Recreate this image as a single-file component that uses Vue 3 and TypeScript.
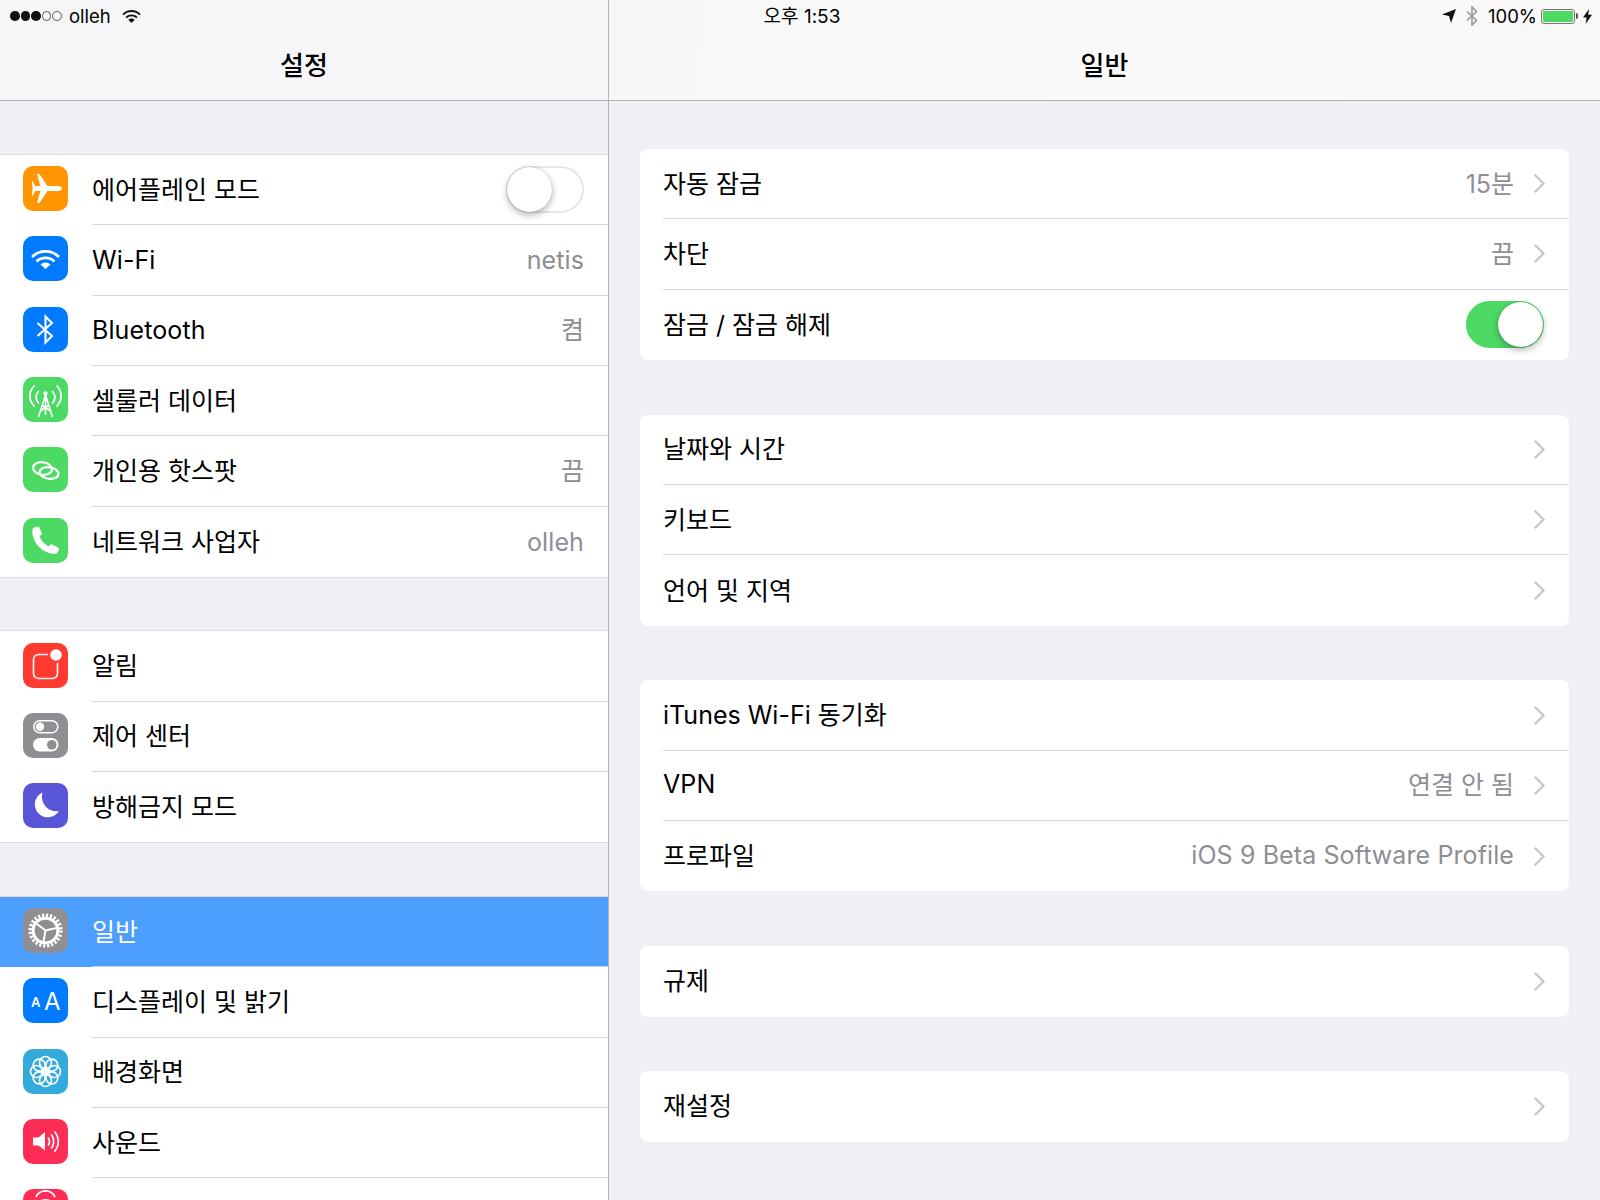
<template>
  <div class="page">
    <div class="status">
      <div class="status-left">
        <span class="dots">
          <i v-for="n in 5" :key="n" class="dot" :class="{ empty: n > 3 }"></i>
        </span>
        <span class="carrier">olleh</span>
        <svg class="st-wifi" viewBox="0 0 19 13" width="19" height="13">
          <path d="M1 4.6A12 12 0 0 1 18 4.6" fill="none" stroke="#111" stroke-width="1.9" />
          <path d="M4 7.6A8 8 0 0 1 15 7.6" fill="none" stroke="#111" stroke-width="1.9" />
          <path d="M9.5 13L6.3 9.8A4.6 4.6 0 0 1 12.7 9.8Z" fill="#111" />
        </svg>
      </div>
      <div class="status-time">오후 1:53</div>
      <div class="status-right">
        <svg class="st-loc" viewBox="0 0 14 14" width="14" height="14">
          <path d="M14 0L9 14L7 7L0 5.5Z" fill="#111" />
        </svg>
        <svg class="st-bt" viewBox="0 0 12 20" width="12" height="20">
          <path d="M1 5.5L10.5 14.5L6 19V1L10.5 5.5L1 14.5" fill="none" stroke="#9a9a9e" stroke-width="1.6" />
        </svg>
        <span class="percent">100%</span>
        <span class="battery"><i></i></span>
        <svg class="st-bolt" viewBox="0 0 9 15" width="9" height="15">
          <path d="M6 0L0 8.6H3.6L2.6 15L9 5.8H5.2Z" fill="#111" />
        </svg>
      </div>
    </div>

    <aside class="master">
      <header class="bar">설정</header>
      <div class="master-body">
        <section v-for="(group, g) in settings" :key="g" class="group">
          <div v-for="row in group" :key="row.icon" class="row" :class="{ selected: row.selected }">
            <span class="icon" :style="{ background: row.color }">
              <svg viewBox="0 0 45 45" width="45" height="45" v-html="icons[row.icon]"></svg>
            </span>
            <div class="row-body">
              <span v-if="row.label" class="label" :class="script(row.label)">{{ row.label }}</span>
              <span v-if="row.value" class="value" :class="script(row.value)">{{ row.value }}</span>
              <span v-if="row.toggle" class="switch"><i></i></span>
            </div>
          </div>
        </section>
      </div>
    </aside>

    <main class="detail">
      <header class="bar bar-detail">일반</header>
      <div class="detail-body">
        <section v-for="(card, c) in general" :key="c" class="card">
          <div v-for="row in card" :key="row.label" class="card-row">
            <div class="card-row-body">
              <span class="label" :class="script(row.label)">{{ row.label }}</span>
              <span v-if="row.value" class="value" :class="script(row.value)">{{ row.value }}</span>
              <span v-if="row.toggle" class="switch on"><i></i></span>
              <svg v-else class="chevron" viewBox="0 0 13 21" width="13" height="21">
                <path d="M1.7 1.7L10.5 10.5L1.7 19.3" fill="none" stroke="#c7c7cc" stroke-width="2.3" />
              </svg>
            </div>
          </div>
        </section>
      </div>
    </main>
  </div>
</template>

<script setup lang="ts">
interface SettingRow {
  label: string
  icon: string
  color: string
  value?: string
  toggle?: boolean
  selected?: boolean
}

interface GeneralRow {
  label: string
  value?: string
  toggle?: boolean
}

// hangul sits a little lower than latin on the shared baseline
const script = (text: string) => (/[\uac00-\ud7a3]/.test(text) ? 'hangul' : 'latin')

const w = 'fill="none" stroke="#fff"'

const icons: Record<string, string> = {
  plane: '<path fill="#fff" d="M39 22.5C39 21 37 20 35 20H24.5L16.5 8H14L17.5 20H12L10 15.5H8.8L9.6 22.5L8.8 29.5H10L12 25H17.5L14 37H16.5L24.5 25H35C37 25 39 24 39 22.5Z"/>',
  wifi: `<path ${w} stroke-width="2.6" d="M9 21A19 19 0 0 1 36 21"/><path ${w} stroke-width="2.6" d="M13.5 25.5A13 13 0 0 1 31.5 25.5"/><path fill="#fff" d="M22.5 33L17.5 28.4A7.4 7.4 0 0 1 27.5 28.4Z"/>`,
  bluetooth: `<path ${w} stroke-width="2.1" d="M14.5 16L29 29L22.5 35.5V9.5L29 16L14.5 29"/>`,
  cell: `<path ${w} stroke-width="1.6" d="M22.5 18L15.5 40M22.5 18L29.5 40M19 28L27.5 34M26 28L17.5 34M22.5 18V38"/><circle cx="22.5" cy="16.5" r="2.2" fill="#fff"/><path ${w} stroke-width="1.8" stroke-linecap="round" d="M11 9C5.5 15 5.5 23 11 29M34 9C39.5 15 39.5 23 34 29M15.5 14.5C12.5 18 12.5 22.5 15.5 26M29.5 14.5C32.5 18 32.5 22.5 29.5 26"/>`,
  hotspot: `<g ${w} stroke-width="2.2"><ellipse cx="19.5" cy="21.5" rx="9.5" ry="6.3" transform="rotate(8 19.5 21.5)"/><ellipse cx="26" cy="26" rx="9.5" ry="5.8" transform="rotate(8 26 26)"/></g>`,
  phone: '<path fill="#fff" d="M11 9.5L14.5 8.5Q15.5 8.3 16 9.3L19 15Q19.4 16 18.5 16.7L16.5 18Q18.5 24 25.5 28.5L27.5 26.6Q28.3 25.9 29.3 26.4L35.5 30Q36.5 30.6 36 31.6L34.5 34.5Q33.5 36 31 36Q20 35 13.5 26Q9 19 9.3 12Q9.5 10 11 9.5Z"/>',
  bell: `<rect x="10.5" y="11.5" width="24" height="24" rx="5" ${w} stroke-width="1.6"/><circle cx="33" cy="12" r="8" fill="#ff3b30"/><circle cx="33" cy="12" r="5.8" fill="#fff"/>`,
  control: `<rect x="10.8" y="7.8" width="24" height="12" rx="6" ${w} stroke-width="1.6"/><circle cx="17" cy="13.8" r="4.2" fill="#fff"/><rect x="10" y="25" width="25.5" height="13.5" rx="6.75" fill="#fff"/><circle cx="28.8" cy="31.8" r="4.8" fill="#8e8e93"/>`,
  moon: '<path fill="#fff" d="M19.5 9.5A13 13 0 1 0 36 28A14.5 14.5 0 0 1 19.5 9.5Z"/>',
  gear: `<circle cx="22.5" cy="22.5" r="15.2" ${w} stroke-width="3.8" stroke-dasharray="2.2 1.78"/><circle cx="22.5" cy="22.5" r="12.3" ${w} stroke-width="3"/><path ${w} stroke-width="2.1" d="M22.5 22.5L14 16M22.5 22.5L33.5 20M22.5 22.5L20.5 33.5"/>`,
  text: '<text x="8" y="29" fill="#fff" font-family="Inter, sans-serif" font-size="13" font-weight="600">A</text><text x="21" y="32" fill="#fff" font-family="Inter, sans-serif" font-size="24">A</text>',
  flower: `<g ${w} stroke-width="1.7"><circle cx="22.5" cy="13.5" r="6"/><circle cx="28.86" cy="16.14" r="6"/><circle cx="31.5" cy="22.5" r="6"/><circle cx="28.86" cy="28.86" r="6"/><circle cx="22.5" cy="31.5" r="6"/><circle cx="16.14" cy="28.86" r="6"/><circle cx="13.5" cy="22.5" r="6"/><circle cx="16.14" cy="16.14" r="6"/></g><circle cx="22.5" cy="22.5" r="2.5" fill="#fff"/>`,
  sound: `<path fill="#fff" d="M10 18.5H15.5L22 13V31.5L15.5 26.5H10Z"/><path ${w} stroke-width="1.7" d="M25 18.5C27 20.5 27 24.5 25 26.5M28.2 15.5C31.5 19.5 31.5 25.5 28.2 29.5M31.5 12.5C36.5 18.5 36.5 26.5 31.5 32.5"/>`,
  lock: `<path ${w} stroke-width="1.8" d="M13 8A10.5 10.5 0 0 1 32 8M15 16A8 8 0 0 1 30 16"/>`
}

const settings: SettingRow[][] = [
  [
    { label: '에어플레인 모드', icon: 'plane', color: '#ff9500', toggle: true },
    { label: 'Wi-Fi', icon: 'wifi', color: '#007aff', value: 'netis' },
    { label: 'Bluetooth', icon: 'bluetooth', color: '#007aff', value: '켬' },
    { label: '셀룰러 데이터', icon: 'cell', color: '#4cd964' },
    { label: '개인용 핫스팟', icon: 'hotspot', color: '#4cd964', value: '끔' },
    { label: '네트워크 사업자', icon: 'phone', color: '#4cd964', value: 'olleh' }
  ],
  [
    { label: '알림', icon: 'bell', color: '#ff3b30' },
    { label: '제어 센터', icon: 'control', color: '#8e8e93' },
    { label: '방해금지 모드', icon: 'moon', color: '#5856d6' }
  ],
  [
    { label: '일반', icon: 'gear', color: '#8e8e93', selected: true },
    { label: '디스플레이 및 밝기', icon: 'text', color: '#007aff' },
    { label: '배경화면', icon: 'flower', color: '#34aadc' },
    { label: '사운드', icon: 'sound', color: '#ff2d55' },
    // only the top of this icon is on screen, its label is below the fold
    { label: '', icon: 'lock', color: '#ff2d55' }
  ]
]

const general: GeneralRow[][] = [
  [
    { label: '자동 잠금', value: '15분' },
    { label: '차단', value: '끔' },
    { label: '잠금 / 잠금 해제', toggle: true }
  ],
  [{ label: '날짜와 시간' }, { label: '키보드' }, { label: '언어 및 지역' }],
  [
    { label: 'iTunes Wi-Fi 동기화' },
    { label: 'VPN', value: '연결 안 됨' },
    { label: '프로파일', value: 'iOS 9 Beta Software Profile' }
  ],
  [{ label: '규제' }],
  [{ label: '재설정' }]
]
</script>

<style>
html,
body {
  margin: 0;
  background: #efeff4;
}
</style>

<style scoped>
.page {
  position: relative;
  display: flex;
  width: 1600px;
  height: 1200px;
  overflow: hidden;
  background: #efeff4;
  color: #000;
  font-family: Inter, "Noto Sans CJK KR", sans-serif;
  font-size: 25px;
}

.status {
  position: absolute;
  top: 0;
  left: 0;
  right: 0;
  height: 32px;
  display: grid;
  grid-template-columns: 1fr auto 1fr;
  align-items: center;
  padding: 0 8px 0 10px;
  font-size: 18.5px;
  z-index: 2;
}

.status-left,
.status-right {
  display: flex;
  align-items: center;
}

.status-right {
  justify-content: flex-end;
}

.status-time {
  font-size: 19px;
  padding: 0 0 3px 2px;
}

.dots {
  display: flex;
  gap: 1px;
}

.dot {
  width: 9.6px;
  height: 9.6px;
  box-sizing: border-box;
  border-radius: 50%;
  background: #111;
}

.dot.empty {
  background: none;
  border: 1px solid #555;
}

.carrier {
  margin-left: 7px;
}

.st-wifi {
  margin-left: 11px;
}

.st-bt {
  margin-left: 10px;
}

.percent {
  margin-left: 10px;
}

.battery {
  position: relative;
  display: block;
  width: 34px;
  height: 15px;
  box-sizing: border-box;
  margin-left: 4px;
  padding: 1px;
  border: 1px solid #777;
  border-radius: 3px;
}

.battery::after {
  content: "";
  position: absolute;
  right: -4px;
  top: 3.5px;
  width: 2px;
  height: 6px;
  background: #555;
  border-radius: 0 2px 2px 0;
}

.battery i {
  display: block;
  height: 100%;
  background: #4cd964;
  border-radius: 1px;
}

.st-bolt {
  margin-left: 8px;
}

.bar {
  box-sizing: border-box;
  height: 101px;
  padding-top: 27px;
  display: flex;
  align-items: center;
  justify-content: center;
  background: #f6f6f8;
  border-bottom: 1px solid #b2b2b6;
  font-size: 26px;
  font-weight: 500;
  flex: none;
}

.bar-detail {
  background: linear-gradient(100deg, #f7f7f8, #fafafa 60%, #f8f8f9);
}

.master {
  width: 609px;
  flex: none;
  box-sizing: border-box;
  border-right: 1px solid #b2b2b6;
}

.master-body {
  display: flex;
  flex-direction: column;
  gap: 54.5px;
  padding-top: 54px;
}

.group {
  background: #fff;
  box-shadow: 0 -1px 0 #dcdce0, 0 1px 0 #dcdce0;
}

.row {
  height: 70.33px;
  display: flex;
  padding-left: 23px;
  box-sizing: border-box;
}

.row:last-child .row-body,
.card-row:last-child .card-row-body {
  border-bottom: 0;
}

.row.selected {
  background: #4c9eff;
  color: #fff;
}

.row.selected .row-body {
  border-bottom-color: #c5d6ec;
}

.icon {
  flex: none;
  align-self: center;
  width: 45px;
  height: 45px;
  margin: 0 24px 3px 0;
  border-radius: 10px;
  overflow: hidden;
}

.icon svg {
  display: block;
}

.row-body {
  flex: 1;
  min-width: 0;
  display: flex;
  align-items: center;
  justify-content: space-between;
  box-sizing: border-box;
  padding: 0 24px 2px 0;
  border-bottom: 1px solid #d9d9dd;
}

.hangul {
  padding-bottom: 2px;
}

.latin {
  letter-spacing: 0.1px;
}

.row .latin {
  padding-top: 2px;
}

.value {
  color: #8e8e93;
}

.switch {
  position: relative;
  display: block;
  width: 78px;
  height: 47px;
  box-sizing: border-box;
  margin-top: 2px;
  border: 2px solid #e6e6e8;
  border-radius: 24px;
  background: #fff;
}

.switch i {
  position: absolute;
  left: -1px;
  top: -1px;
  width: 45px;
  height: 45px;
  border-radius: 50%;
  background: #fff;
  box-shadow: 0 3px 7px rgba(0, 0, 0, 0.3), 0 0 1px rgba(0, 0, 0, 0.3);
}

.switch.on {
  margin-right: 2px;
  background: #4cd964;
  border-color: #4cd964;
}

.switch.on i {
  left: auto;
  right: -1px;
}

.detail {
  flex: 1;
  min-width: 0;
}

.detail-body {
  display: flex;
  flex-direction: column;
  gap: 54.75px;
  padding: 48px 31px 0;
}

.card {
  background: #fff;
  border-radius: 8px;
  overflow: hidden;
}

.card-row {
  height: 70.33px;
  padding-left: 23px;
}

.card-row-body {
  height: 100%;
  box-sizing: border-box;
  display: flex;
  align-items: center;
  padding: 0 23px 2px 0;
  border-bottom: 1px solid #d9d9dd;
}

.card-row-body .label {
  flex: 1;
}

.chevron {
  flex: none;
  margin: 2px 0 0 19px;
}
</style>
